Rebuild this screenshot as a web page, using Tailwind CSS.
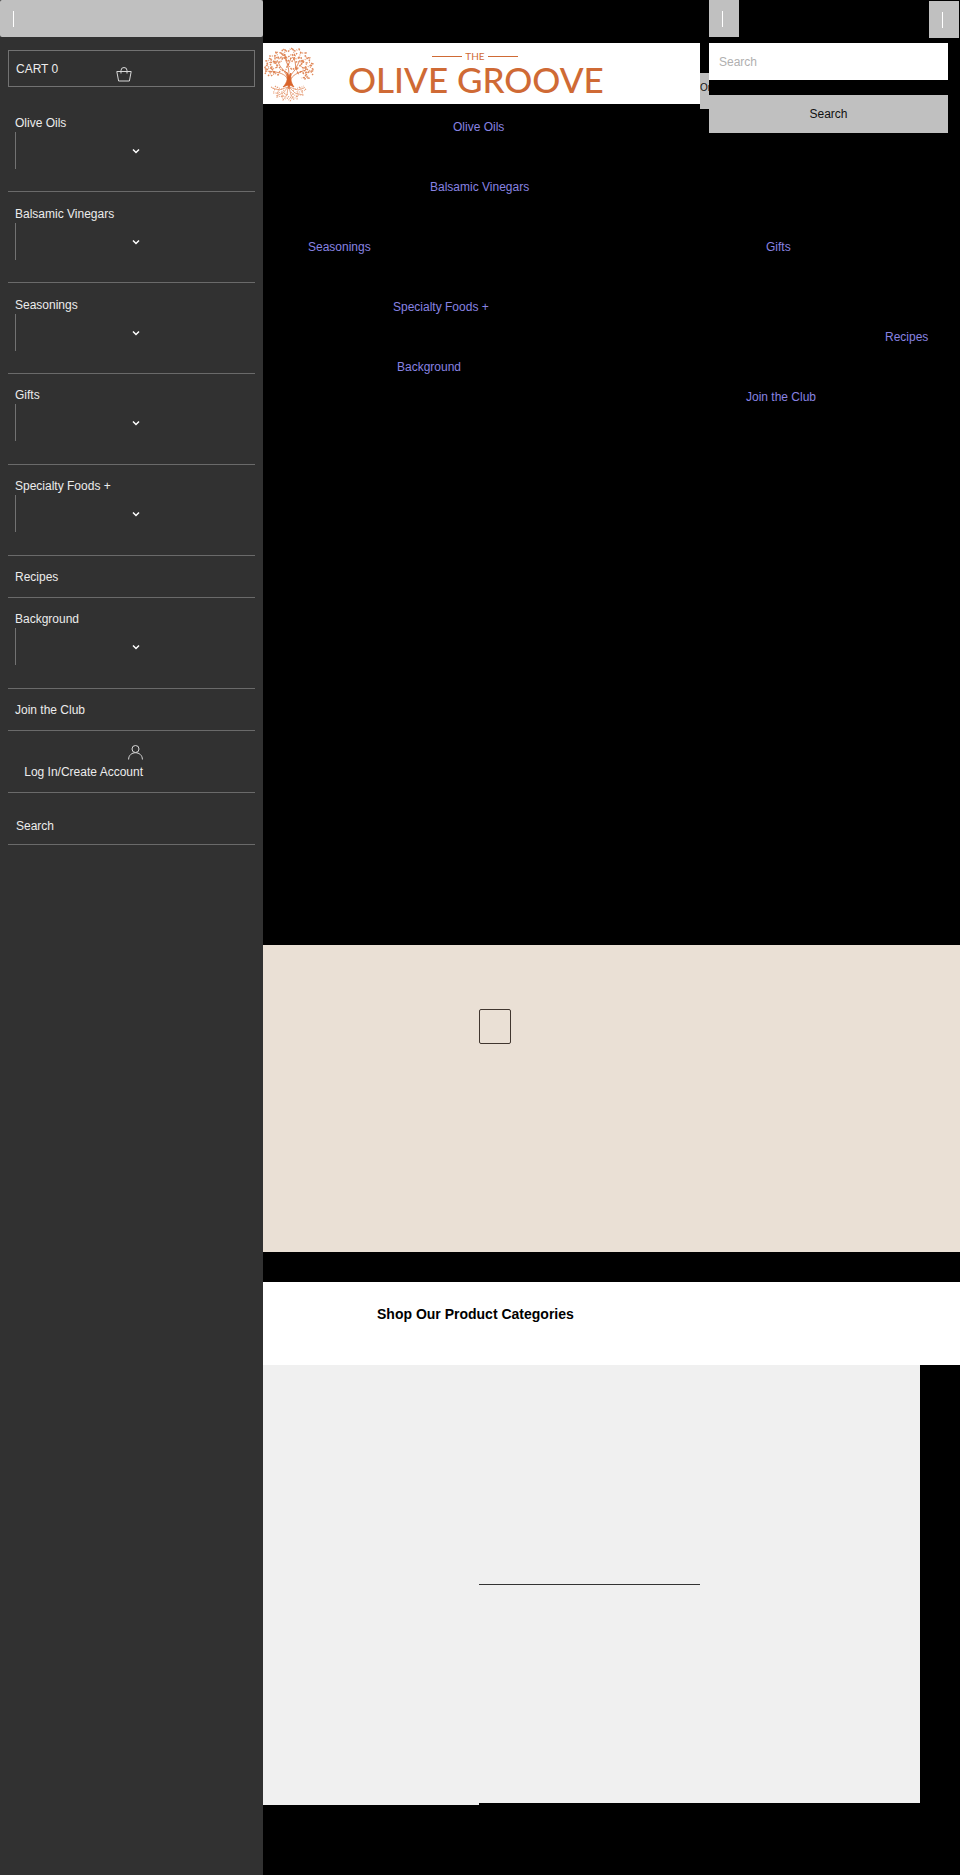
<!DOCTYPE html>
<html lang="en">
<head>
  <meta charset="UTF-8" />
  <meta name="viewport" content="width=device-width, initial-scale=1.0" />
  <title>The Olive Groove</title>
  <script src="https://cdn.jsdelivr.net/npm/@tailwindcss/browser@4"></script>
</head>
<body class="flex min-h-screen bg-black font-['Liberation_Sans',sans-serif] text-xs">

  <!-- Mobile menu -->
  <aside class="w-[263px] shrink-0 bg-[#313131] text-[#ececec]">
    <button aria-label="Close menu" class="flex h-[37px] w-full items-center rounded-xs bg-[#c0c0c0] px-[13px]">
      <span class="h-4 w-px bg-white"></span>
    </button>

    <div class="px-2 pt-[13px]">
      <a href="#" class="flex h-[37px] border border-[#727272] px-[7px]">
        <span class="w-[100px] leading-[37px]">CART 0</span>
        <svg class="mt-4 h-[15px] w-4" viewBox="0 0 16 15" fill="none" stroke="#d8d8d8">
          <path d="M.8 4.500h14.400l-1.800 9.500H2.600zM5 6.500V3.500a3 3 0 0 1 6 0v3" />
        </svg>
      </a>

      <ul class="mt-[14px]">
        <li class="h-[91px] border-b border-[#6a6a6a] pl-[7px] pt-[13px]">
          <a href="#" class="block leading-[18px]">Olive Oils</a>
          <button aria-label="Expand Olive Oils" class="flex h-[37px] w-full items-center justify-center border-l border-[#727272]">
            <svg class="h-2 w-2" viewBox="0 0 8 8" fill="none" stroke="#fff" stroke-width="1.500"><path d="M1 2.500l3 3 3-3" /></svg>
          </button>
        </li>
        <li class="h-[91px] border-b border-[#6a6a6a] pl-[7px] pt-[13px]">
          <a href="#" class="block leading-[18px]">Balsamic Vinegars</a>
          <button aria-label="Expand Balsamic Vinegars" class="flex h-[37px] w-full items-center justify-center border-l border-[#727272]">
            <svg class="h-2 w-2" viewBox="0 0 8 8" fill="none" stroke="#fff" stroke-width="1.500"><path d="M1 2.500l3 3 3-3" /></svg>
          </button>
        </li>
        <li class="h-[91px] border-b border-[#6a6a6a] pl-[7px] pt-[13px]">
          <a href="#" class="block leading-[18px]">Seasonings</a>
          <button aria-label="Expand Seasonings" class="flex h-[37px] w-full items-center justify-center border-l border-[#727272]">
            <svg class="h-2 w-2" viewBox="0 0 8 8" fill="none" stroke="#fff" stroke-width="1.500"><path d="M1 2.500l3 3 3-3" /></svg>
          </button>
        </li>
        <li class="h-[91px] border-b border-[#6a6a6a] pl-[7px] pt-3">
          <a href="#" class="block leading-[18px]">Gifts</a>
          <button aria-label="Expand Gifts" class="flex h-[37px] w-full items-center justify-center border-l border-[#727272]">
            <svg class="h-2 w-2" viewBox="0 0 8 8" fill="none" stroke="#fff" stroke-width="1.500"><path d="M1 2.500l3 3 3-3" /></svg>
          </button>
        </li>
        <li class="h-[91px] border-b border-[#6a6a6a] pl-[7px] pt-3">
          <a href="#" class="block leading-[18px]">Specialty Foods +</a>
          <button aria-label="Expand Specialty Foods" class="flex h-[37px] w-full items-center justify-center border-l border-[#727272]">
            <svg class="h-2 w-2" viewBox="0 0 8 8" fill="none" stroke="#fff" stroke-width="1.500"><path d="M1 2.500l3 3 3-3" /></svg>
          </button>
        </li>
        <li class="h-[42px] border-b border-[#6a6a6a] px-[7px] pt-3">
          <a href="#" class="block leading-[18px]">Recipes</a>
        </li>
        <li class="h-[91px] border-b border-[#6a6a6a] pl-[7px] pt-3">
          <a href="#" class="block leading-[18px]">Background</a>
          <button aria-label="Expand Background" class="flex h-[37px] w-full items-center justify-center border-l border-[#727272]">
            <svg class="h-2 w-2" viewBox="0 0 8 8" fill="none" stroke="#fff" stroke-width="1.500"><path d="M1 2.500l3 3 3-3" /></svg>
          </button>
        </li>
        <li class="h-[42px] border-b border-[#6a6a6a] px-[7px] pt-3">
          <a href="#" class="block leading-[18px]">Join the Club</a>
        </li>
        <li class="h-[62px] border-b border-[#6a6a6a] pt-[14px]">
          <a href="#" class="flex w-[135px] flex-col items-end gap-[3px]">
            <svg class="h-[15px] w-[15px]" viewBox="0 0 15 15" fill="none" stroke="#d8d8d8"><circle cx="7.500" cy="4" r="3.500" /><path d="M.6 14.500c0-9 13.800-9 13.800 0" /></svg>
            <span class="leading-[18px]">Log In/Create Account</span>
          </a>
        </li>
        <li class="h-[52px] border-b border-[#6a6a6a] px-2 pt-6">
          <a href="#" class="block leading-[18px]">Search</a>
        </li>
      </ul>
    </div>
  </aside>

  <main class="min-w-0 flex-1">
    <header class="flex h-[104px]">
      <div class="flex-1 pt-[43px]">
        <a href="#" class="flex h-[61px] bg-white text-[#cf6a35]">
          <svg class="mt-1 h-[56px] w-[52px] shrink-0" viewBox="0 0 52 56" fill="none" stroke="#d9733f">
            <!-- leaves -->
            <g stroke="#e08a5c" stroke-width="1.400" stroke-dasharray="1.700 1.100 .8 1.300 2.200 1.500">
              <path d="M2 27l2-4-3-2 4-3-2-4 5-1-1-4 5 0 1-4 5 1 2-4 5 3 3-4 4 3 4-2 2 4 5 0-1 4 5 1-1 4 4 2-3 3 4 3-3 2 2 3" />
              <path d="M5 29l3-3-4-4 5-2-3-5 6 1 0-6 5 2 3-5 4 4 5-4 3 5 6-2 1 5 5 1-2 5 5 3-4 3 3 4-5 1" />
              <path d="M8 29l4-3-3-4 6-2-3-5 6 0 2-5 5 4 4-4 4 5 6-1-1 6 5 2-3 4 4 4-6 1" />
              <path d="M3 18l6 4M6 11l7 5M13 5l3 7M22 2l-1 8M30 2l2 8M38 5l-3 8M45 11l-8 4M48 18l-8 4M2 24l9 1M49 24l-9 2M10 14l8 8M41 14l-8 9M18 6l6 8M34 6l-6 10" />
              <path d="M10 25l5 3 3-6 4 3 3-8 4 6 4-3 2 7 5-4" />
            </g>
            <!-- branches -->
            <g stroke-width=".8">
              <path d="M25 36c0-6-3-8-8-10l-8-2M25 34c-1-8-4-10-8-15l-3-6M26 34c0-9 0-14-3-20l-1-7M26 34c1-8 6-9 8-15l3-6M27 35c1-6 6-8 10-10l6-2M33 22l-1-8M25 19l3-8" />
            </g>
            <path d="M23.500 25c1.500 2 2 3 2.500 5 .4-2 1-3 2-4-.6 5-.5 9 3 14l-4-2-1 4-1-4-5 2c5-5 5-10 3.500-15z" fill="#d9632a" stroke="#d9632a" stroke-width=".8" />
            <!-- roots -->
            <g stroke="#e08a5c" stroke-width=".7">
              <path d="M25 40l-9 3-7-2M25 40l-5 6-7 3M25 40l-1 8-4 5M26 40l2 8 3 5M26 40l6 6 8 2M26 40l9 3 6-2" />
            </g>
            <g stroke="#e59b74" stroke-width="1.100" stroke-dasharray="1.300 1.100 .7 1.400">
              <path d="M8 40l4 2-2 4 5 0-1 4 5-1 1 4 4-2 3 3 3-4 4 2 1-4 5 0-1-4 4-1-2-3" />
              <path d="M12 39l4 4-2 3 5-1 1 5 4-3 3 5 2-5 5 2 0-4 5 0-2-4 4-2M14 40l8 4M37 40l-8 4M18 50l5-5M34 50l-6-5" />
            </g>
          </svg>
          <div class="ml-[33px] w-[254px] pt-2 font-['Lato',sans-serif]">
            <div class="flex items-center justify-center gap-[3px] text-[10px] leading-[10px]">
              <span class="h-px w-[30px] bg-[#cf6a35]"></span>THE<span class="h-px w-[30px] bg-[#cf6a35]"></span>
            </div>
            <div class="text-center text-[35px] leading-9 font-medium whitespace-nowrap">OLIVE GROOVE</div>
          </div>
        </a>
      </div>
      <button class="mt-[73px] h-9 w-[9px] shrink-0 overflow-hidden bg-[#c0c0c0] pb-1.5 text-left text-[10px] text-[#111]">Or</button>

      <!-- Search panel -->
      <div class="w-[251px] shrink-0">
        <div class="flex justify-between pr-px">
          <button aria-label="Open menu" class="flex h-[37px] w-[30px] items-center bg-[#c0c0c0] pl-[13px]"><span class="h-4 w-px bg-white"></span></button>
          <button aria-label="Close search" class="mt-px flex h-[37px] w-[30px] items-center bg-[#c0c0c0] pl-[13px]"><span class="h-4 w-px bg-white"></span></button>
        </div>
        <form class="mt-[5px] mr-3">
          <input type="search" aria-label="Search" placeholder="Search" class="block h-[37px] w-full bg-white px-2.5 placeholder:text-[#b0b0b0]" />
          <button type="button" class="mt-[15px] block h-[38px] w-full bg-[#c0c0c0] text-[#111]">Search</button>
        </form>
      </div>
    </header>

    <nav class="h-[841px] pt-2 leading-[30px] text-[#8883e2]">
      <ul>
        <li class="mb-[30px] pl-[190px]"><a href="#">Olive Oils</a></li>
        <li class="mb-[30px] pl-[167px]"><a href="#">Balsamic Vinegars</a></li>
        <li class="mb-[30px] flex pl-[45px]">
          <a href="#" class="w-[458px]">Seasonings</a>
          <a href="#">Gifts</a>
        </li>
        <li class="pl-[130px]"><a href="#">Specialty Foods +</a></li>
        <li class="pl-[622px]"><a href="#">Recipes</a></li>
        <li class="pl-[134px]"><a href="#">Background</a></li>
        <li class="pl-[483px]"><a href="#">Join the Club</a></li>
      </ul>
    </nav>

    <section class="h-[307px] bg-[#eae0d5] pt-16 pl-[216px]">
      <button aria-label="Play slideshow" class="block h-[35px] w-8 rounded-xs border border-[#40362f]"></button>
    </section>

    <section class="mt-[30px]">
      <h2 class="h-[83px] bg-white pt-[21px] pl-[114px] text-sm leading-[22px] font-bold text-black">Shop Our Product Categories</h2>
      <div class="flex items-start pr-10">
        <div class="h-[440px] w-[216px] bg-[#f0f0f0]"></div>
        <div class="h-[438px] flex-1 bg-[#f0f0f0] pt-[219px]">
          <hr class="w-1/2 border-[#333]" />
        </div>
      </div>
    </section>
  </main>

</body>
</html>
